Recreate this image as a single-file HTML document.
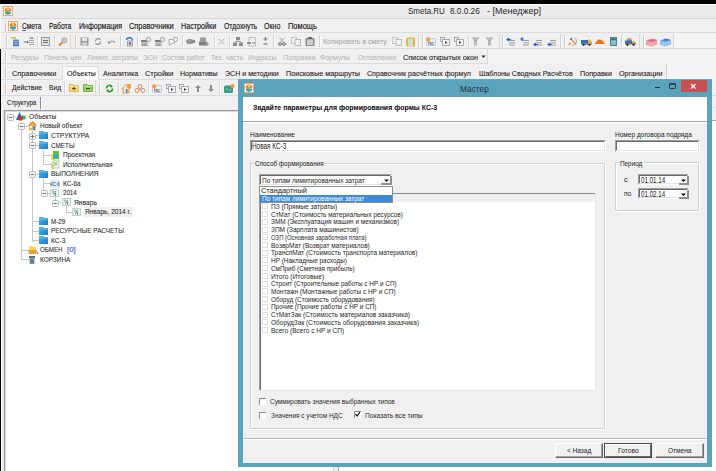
<!DOCTYPE html>
<html><head><meta charset="utf-8">
<style>
*{margin:0;padding:0;box-sizing:border-box}
html,body{width:716px;height:471px;overflow:hidden;background:#fff}
body{position:relative;font-family:"Liberation Sans",sans-serif}
.a{position:absolute}
.t{position:absolute;white-space:pre;line-height:1;transform-origin:0 0}
.s{-webkit-text-stroke:0.25px currentColor}
.s2{-webkit-text-stroke:0.08px currentColor}
.s3{-webkit-text-stroke:0.15px currentColor}
svg{position:absolute;overflow:visible}
</style></head><body>
<div class="a" style="left:0px;top:0px;width:716px;height:4px;background:#000"></div>
<div class="a" style="left:0px;top:4px;width:716px;height:14px;background:#ebebeb"></div>
<div class="a" style="left:0px;top:4px;width:716px;height:1px;background:#fafafa"></div>
<div class="a" style="left:0px;top:4px;width:1px;height:45px;background:#f8f8f8"></div>
<div class="a" style="left:1px;top:18px;width:715px;height:1px;background:#d6d6d6"></div>
<div class="a" style="left:1px;top:19px;width:715px;height:14px;background:#f0f0f0"></div>
<div class="a" style="left:1px;top:32px;width:715px;height:1px;background:#dcdcdc"></div>
<div class="a" style="left:1px;top:33px;width:715px;height:16px;background:#f0f0f0"></div>
<div class="a" style="left:1px;top:48px;width:715px;height:1px;background:#dcdcdc"></div>
<div class="a" style="left:1px;top:49px;width:715px;height:15px;background:#f0f0f0"></div>
<div class="a" style="left:1px;top:63px;width:715px;height:1px;background:#dcdcdc"></div>
<div class="a" style="left:1px;top:64px;width:715px;height:16px;background:#f0f0f0"></div>
<div class="a" style="left:1px;top:79px;width:715px;height:1px;background:#dcdcdc"></div>
<div class="a" style="left:1px;top:80px;width:715px;height:16px;background:#f0f0f0"></div>
<div class="a" style="left:1px;top:95px;width:715px;height:1px;background:#dcdcdc"></div>
<div class="a" style="left:1px;top:96px;width:715px;height:375px;background:#f0f0f0"></div>
<div class="a" style="left:5px;top:21px;width:1px;height:11px;background:#c9c9c9"></div>
<div class="a" style="left:6px;top:21px;width:1px;height:11px;background:#fdfdfd"></div>
<div class="t " style="left:407.8px;top:6.23px;font-size:9.5px;color:#262626;transform:scaleX(0.8421);">Smeta.RU</div>
<div class="t " style="left:449.6px;top:6.23px;font-size:9.5px;color:#262626;transform:scaleX(0.8650);">8.0.0.26</div>
<div class="t " style="left:487.2px;top:6.23px;font-size:9.5px;color:#262626;transform:scaleX(0.9445);">- [Менеджер]</div>
<div class="t s3" style="left:21.9px;top:21.59px;font-size:8.6px;color:#151515;transform:scaleX(0.7684);">Смета</div>
<div class="t s3" style="left:48.6px;top:21.59px;font-size:8.6px;color:#151515;transform:scaleX(0.7893);">Работа</div>
<div class="t s3" style="left:78.7px;top:21.59px;font-size:8.6px;color:#151515;transform:scaleX(0.8185);">Информация</div>
<div class="t s3" style="left:129.2px;top:21.59px;font-size:8.6px;color:#151515;transform:scaleX(0.8580);">Справочники</div>
<div class="t s3" style="left:180.7px;top:21.59px;font-size:8.6px;color:#151515;transform:scaleX(0.8371);">Настройки</div>
<div class="t s3" style="left:223.6px;top:21.59px;font-size:8.6px;color:#151515;transform:scaleX(0.7940);">Отдохнуть</div>
<div class="t s3" style="left:263.6px;top:21.59px;font-size:8.6px;color:#151515;transform:scaleX(0.8206);">Окно</div>
<div class="t s3" style="left:287.7px;top:21.59px;font-size:8.6px;color:#151515;transform:scaleX(0.8701);">Помощь</div>
<div class="a" style="left:22px;top:30px;width:4px;height:1px;background:#666"></div>
<div class="a" style="left:6px;top:35px;width:1px;height:12px;background:#c9c9c9"></div>
<div class="a" style="left:7px;top:35px;width:1px;height:12px;background:#fdfdfd"></div>
<div class="a" style="left:37px;top:35px;width:1px;height:12px;background:#d4d4d4"></div>
<div class="a" style="left:38px;top:35px;width:1px;height:12px;background:#fcfcfc"></div>
<div class="a" style="left:54px;top:35px;width:1px;height:12px;background:#d4d4d4"></div>
<div class="a" style="left:55px;top:35px;width:1px;height:12px;background:#fcfcfc"></div>
<div class="a" style="left:70px;top:34px;width:1px;height:14px;background:#d8d8d8"></div>
<div class="a" style="left:75px;top:35px;width:1px;height:12px;background:#c9c9c9"></div>
<div class="a" style="left:76px;top:35px;width:1px;height:12px;background:#fdfdfd"></div>
<div class="a" style="left:120px;top:35px;width:1px;height:12px;background:#d4d4d4"></div>
<div class="a" style="left:121px;top:35px;width:1px;height:12px;background:#fcfcfc"></div>
<div class="a" style="left:137px;top:35px;width:1px;height:12px;background:#d4d4d4"></div>
<div class="a" style="left:138px;top:35px;width:1px;height:12px;background:#fcfcfc"></div>
<div class="a" style="left:182px;top:35px;width:1px;height:12px;background:#d4d4d4"></div>
<div class="a" style="left:183px;top:35px;width:1px;height:12px;background:#fcfcfc"></div>
<div class="a" style="left:214px;top:35px;width:1px;height:12px;background:#d4d4d4"></div>
<div class="a" style="left:215px;top:35px;width:1px;height:12px;background:#fcfcfc"></div>
<div class="a" style="left:229px;top:35px;width:1px;height:12px;background:#d4d4d4"></div>
<div class="a" style="left:230px;top:35px;width:1px;height:12px;background:#fcfcfc"></div>
<div class="a" style="left:273px;top:35px;width:1px;height:12px;background:#d4d4d4"></div>
<div class="a" style="left:274px;top:35px;width:1px;height:12px;background:#fcfcfc"></div>
<div class="a" style="left:319px;top:35px;width:1px;height:12px;background:#d4d4d4"></div>
<div class="a" style="left:320px;top:35px;width:1px;height:12px;background:#fcfcfc"></div>
<div class="a" style="left:418px;top:34px;width:1px;height:14px;background:#d8d8d8"></div>
<div class="a" style="left:422px;top:35px;width:1px;height:12px;background:#c9c9c9"></div>
<div class="a" style="left:423px;top:35px;width:1px;height:12px;background:#fdfdfd"></div>
<div class="a" style="left:468px;top:35px;width:1px;height:12px;background:#d4d4d4"></div>
<div class="a" style="left:469px;top:35px;width:1px;height:12px;background:#fcfcfc"></div>
<div class="a" style="left:499px;top:34px;width:1px;height:14px;background:#d8d8d8"></div>
<div class="a" style="left:502px;top:35px;width:1px;height:12px;background:#c9c9c9"></div>
<div class="a" style="left:503px;top:35px;width:1px;height:12px;background:#fdfdfd"></div>
<div class="a" style="left:560px;top:34px;width:1px;height:14px;background:#d8d8d8"></div>
<div class="a" style="left:564px;top:35px;width:1px;height:12px;background:#c9c9c9"></div>
<div class="a" style="left:565px;top:35px;width:1px;height:12px;background:#fdfdfd"></div>
<div class="a" style="left:621px;top:35px;width:1px;height:12px;background:#d4d4d4"></div>
<div class="a" style="left:622px;top:35px;width:1px;height:12px;background:#fcfcfc"></div>
<div class="a" style="left:639px;top:34px;width:1px;height:14px;background:#d8d8d8"></div>
<div class="a" style="left:643px;top:35px;width:1px;height:12px;background:#c9c9c9"></div>
<div class="a" style="left:644px;top:35px;width:1px;height:12px;background:#fdfdfd"></div>
<div class="a" style="left:673px;top:34px;width:1px;height:14px;background:#d8d8d8"></div>
<div class="t " style="left:322.7px;top:38.20px;font-size:8px;color:#a0a0a0;transform:scaleX(0.8701);">Копировать в смету</div>
<div class="a" style="left:5px;top:51px;width:1px;height:12px;background:#c9c9c9"></div>
<div class="a" style="left:6px;top:51px;width:1px;height:12px;background:#fdfdfd"></div>
<div class="t " style="left:11.2px;top:53.50px;font-size:8.0px;color:#b0b0b0;transform:scaleX(0.8750);">Ресурсы</div>
<div class="t " style="left:44px;top:53.50px;font-size:8.0px;color:#b0b0b0;transform:scaleX(0.8723);">Панель цен</div>
<div class="t " style="left:86.7px;top:53.50px;font-size:8.0px;color:#b0b0b0;transform:scaleX(0.9002);">Лимит. затраты</div>
<div class="t " style="left:142.7px;top:53.50px;font-size:8.0px;color:#b0b0b0;transform:scaleX(0.8264);">ЭСН</div>
<div class="t " style="left:162px;top:53.50px;font-size:8.0px;color:#b0b0b0;transform:scaleX(0.8576);">Состав работ</div>
<div class="t " style="left:210.7px;top:53.50px;font-size:8.0px;color:#b0b0b0;transform:scaleX(0.8562);">Тех. часть</div>
<div class="t " style="left:248.4px;top:53.50px;font-size:8.0px;color:#b0b0b0;transform:scaleX(0.8705);">Индексы</div>
<div class="t " style="left:282.6px;top:53.50px;font-size:8.0px;color:#b0b0b0;transform:scaleX(0.9145);">Поправки</div>
<div class="t " style="left:320px;top:53.50px;font-size:8.0px;color:#b0b0b0;transform:scaleX(0.8618);">Формулы</div>
<div class="t " style="left:357.6px;top:53.50px;font-size:8.0px;color:#b0b0b0;transform:scaleX(0.8565);">Оглавление</div>
<div class="t s2" style="left:403.3px;top:53.50px;font-size:8.0px;color:#141414;transform:scaleX(0.9022);">Список открытых окон</div>
<svg style="left:481px;top:55px" width="5" height="4"><path d="M0.5 0.5h4l-2 2.5z" fill="#222"/></svg>
<div class="a" style="left:487px;top:49px;width:1px;height:15px;background:#d8d8d8"></div>
<div class="a" style="left:488px;top:49px;width:228px;height:15px;background:#f3f3f3"></div>
<div class="a" style="left:5px;top:66px;width:1px;height:12px;background:#c9c9c9"></div>
<div class="a" style="left:6px;top:66px;width:1px;height:12px;background:#fdfdfd"></div>
<div class="a" style="left:62px;top:66px;width:37px;height:14px;background:#fafafa;border:1px solid #dadada;border-bottom:none"></div>
<div class="t s2" style="left:11.5px;top:69.50px;font-size:8.0px;color:#151515;transform:scaleX(0.9141);">Справочники</div>
<div class="t s2" style="left:67.3px;top:69.50px;font-size:8.0px;color:#151515;transform:scaleX(0.8760);">Объекты</div>
<div class="t s2" style="left:102.5px;top:69.50px;font-size:8.0px;color:#151515;transform:scaleX(0.8889);">Аналитика</div>
<div class="t s2" style="left:144.5px;top:69.50px;font-size:8.0px;color:#151515;transform:scaleX(0.9228);">Стройки</div>
<div class="t s2" style="left:180px;top:69.50px;font-size:8.0px;color:#151515;transform:scaleX(0.8853);">Нормативы</div>
<div class="t s2" style="left:224.8px;top:69.50px;font-size:8.0px;color:#151515;transform:scaleX(0.8824);">ЭСН и методики</div>
<div class="t s2" style="left:285.6px;top:69.50px;font-size:8.0px;color:#151515;transform:scaleX(0.9028);">Поисковые маршруты</div>
<div class="t s2" style="left:367px;top:69.50px;font-size:8.0px;color:#151515;transform:scaleX(0.8869);">Справочник расчётных формул</div>
<div class="t s2" style="left:478.7px;top:69.50px;font-size:8.0px;color:#151515;transform:scaleX(0.8732);">Шаблоны Сводных Расчётов</div>
<div class="t s2" style="left:579.8px;top:69.50px;font-size:8.0px;color:#151515;transform:scaleX(0.8948);">Поправки</div>
<div class="t s2" style="left:618.5px;top:69.50px;font-size:8.0px;color:#151515;transform:scaleX(0.8990);">Организации</div>
<div class="a" style="left:666px;top:64px;width:1px;height:16px;background:#d0d0d0"></div>
<div class="a" style="left:667px;top:64px;width:49px;height:16px;background:#f3f3f3"></div>
<div class="a" style="left:5px;top:82px;width:1px;height:12px;background:#c9c9c9"></div>
<div class="a" style="left:6px;top:82px;width:1px;height:12px;background:#fdfdfd"></div>
<div class="t s2" style="left:11.7px;top:83.70px;font-size:8.0px;color:#151515;transform:scaleX(0.8559);">Действие</div>
<div class="t s2" style="left:48.9px;top:83.70px;font-size:8.0px;color:#151515;transform:scaleX(0.8291);">Вид</div>
<div class="a" style="left:64px;top:82px;width:1px;height:12px;background:#d4d4d4"></div>
<div class="a" style="left:65px;top:82px;width:1px;height:12px;background:#fcfcfc"></div>
<div class="a" style="left:95px;top:81px;width:1px;height:14px;background:#d8d8d8"></div>
<div class="a" style="left:99px;top:82px;width:1px;height:12px;background:#c9c9c9"></div>
<div class="a" style="left:100px;top:82px;width:1px;height:12px;background:#fdfdfd"></div>
<div class="a" style="left:118px;top:82px;width:1px;height:12px;background:#d4d4d4"></div>
<div class="a" style="left:119px;top:82px;width:1px;height:12px;background:#fcfcfc"></div>
<div class="a" style="left:148px;top:82px;width:1px;height:12px;background:#d4d4d4"></div>
<div class="a" style="left:149px;top:82px;width:1px;height:12px;background:#fcfcfc"></div>
<div class="a" style="left:219px;top:82px;width:1px;height:12px;background:#d4d4d4"></div>
<div class="a" style="left:220px;top:82px;width:1px;height:12px;background:#fcfcfc"></div>
<div class="t s2" style="left:6.7px;top:98.84px;font-size:7.6px;color:#151515;transform:scaleX(0.8126);">Структура</div>
<div class="a" style="left:40px;top:97px;width:1px;height:12px;background:#8a8a8a"></div>
<div class="a" style="left:41px;top:97px;width:1px;height:12px;background:#fff"></div>
<div class="a" style="left:0px;top:49px;width:1px;height:422px;background:#000"></div>
<div class="a" style="left:4px;top:110px;width:330px;height:361px;background:#fff;border-left:1px solid #9a9a9a;border-top:1px solid #9a9a9a"></div>
<div class="a" style="left:5px;top:111px;width:329px;height:1px;background:#dadada"></div>
<div class="a" style="left:5px;top:111px;width:1px;height:360px;background:#dadada"></div>
<div class="a" style="left:1px;top:110px;width:1px;height:361px;background:#fff"></div>
<div class="a" style="left:2px;top:110px;width:2px;height:361px;background:#e8e8e8"></div>
<div class="a" style="left:334px;top:110px;width:4px;height:361px;background:#f0f0f0"></div>
<div class="a" style="left:333px;top:110px;width:1px;height:361px;background:#d0d0d0"></div>
<div class="a" style="left:338px;top:120px;width:378px;height:351px;background:#fff;border-top:1px solid #a5a5a5;border-left:1px solid #a5a5a5"></div>
<div class="a" style="left:712px;top:107px;width:4px;height:1px;background:#e4e4e4"></div>
<div class="a" style="left:238px;top:79px;width:474px;height:388px;background:#5aa3bd"></div>
<div class="a" style="left:238px;top:79px;width:474px;height:1px;background:#6aa6ba"></div>
<div class="a" style="left:243px;top:97px;width:464px;height:366px;background:#f0f0f0"></div>
<div class="a" style="left:243px;top:97px;width:464px;height:24px;background:#fff"></div>
<div class="a" style="left:243px;top:121px;width:464px;height:1px;background:#a0a0a0"></div>
<div class="a" style="left:243px;top:122px;width:464px;height:1px;background:#fff"></div>
<svg style="left:244px;top:83px" width="10" height="10"><rect x="0.5" y="0.5" width="9" height="9" fill="#fff" stroke="#f2a870"/><path d="M1.5 5a3.5 3.5 0 0 1 7 0z" fill="#f58a1f"/><circle cx="5" cy="3.2" r="1" fill="#ffd9a0"/><path d="M1.8 5.5h6.4a3.2 3.2 0 0 1-6.4 0z" fill="#3aa0d0"/><path d="M1.8 5.5h3.5l-1 2.8a3.2 3.2 0 0 1-2.5-2.8z" fill="#4cb04a"/></svg>
<svg style="left:3px;top:6px" width="10" height="10"><rect x="0.5" y="0.5" width="9" height="9" fill="#fff" stroke="#f2a870"/><path d="M1.5 5a3.5 3.5 0 0 1 7 0z" fill="#f58a1f"/><circle cx="5" cy="3.2" r="1" fill="#ffd9a0"/><path d="M1.8 5.5h6.4a3.2 3.2 0 0 1-6.4 0z" fill="#3aa0d0"/><path d="M1.8 5.5h3.5l-1 2.8a3.2 3.2 0 0 1-2.5-2.8z" fill="#4cb04a"/></svg>
<svg style="left:8px;top:21px" width="10" height="10"><rect x="0.5" y="0.5" width="9" height="9" fill="#fff" stroke="#f2a870"/><path d="M1.5 5a3.5 3.5 0 0 1 7 0z" fill="#f58a1f"/><circle cx="5" cy="3.2" r="1" fill="#ffd9a0"/><path d="M1.8 5.5h6.4a3.2 3.2 0 0 1-6.4 0z" fill="#3aa0d0"/><path d="M1.8 5.5h3.5l-1 2.8a3.2 3.2 0 0 1-2.5-2.8z" fill="#4cb04a"/></svg>
<div class="t " style="left:459.9px;top:83.54px;font-size:9.6px;color:#263238;transform:scaleX(0.8672);">Мастер</div>
<div class="a" style="left:655px;top:87px;width:5px;height:1px;background:#1e2f36"></div>
<svg style="left:669px;top:83px" width="8" height="6"><rect x="0.5" y="0.5" width="6" height="5" rx="0.8" fill="none" stroke="#2a3b42"/><rect x="0.5" y="0.5" width="6" height="1.3" fill="#2a3b42"/></svg>
<div class="a" style="left:681px;top:80px;width:26px;height:12px;background:#c75050"></div>
<svg style="left:690px;top:83px" width="7" height="7"><path d="M1 1l4.5 4.5M5.5 1l-4.5 4.5" stroke="#fff" stroke-width="1.1"/></svg>
<div class="t " style="left:253.4px;top:103.54px;font-size:7.6px;color:#0a0a0a;font-weight:bold;transform:scaleX(0.9218);">Задайте параметры для формирования формы КС-3</div>
<div class="t " style="left:250.1px;top:131.17px;font-size:7.8px;color:#202020;transform:scaleX(0.8322);">Наименование</div>
<div class="a" style="left:250px;top:140px;width:356px;height:12px;background:#fff;border-top:1px solid #a0a0a0;border-left:1px solid #a0a0a0;border-bottom:1px solid #fff;border-right:1px solid #fff"></div>
<div class="a" style="left:251px;top:141px;width:354px;height:1px;background:#696969"></div>
<div class="a" style="left:251px;top:141px;width:1px;height:10px;background:#696969"></div>
<div class="a" style="left:251px;top:150px;width:354px;height:1px;background:#e3e3e3"></div>
<div class="a" style="left:604px;top:141px;width:1px;height:10px;background:#e3e3e3"></div>
<div class="t " style="left:251.8px;top:143.13px;font-size:8.2px;color:#202020;transform:scaleX(0.7809);">Новая КС-3</div>
<div class="t " style="left:615px;top:131.37px;font-size:7.8px;color:#202020;transform:scaleX(0.8382);">Номер договора подряда</div>
<div class="a" style="left:615px;top:140px;width:85px;height:12px;background:#fff;border-top:1px solid #a0a0a0;border-left:1px solid #a0a0a0;border-bottom:1px solid #fff;border-right:1px solid #fff"></div>
<div class="a" style="left:616px;top:141px;width:83px;height:1px;background:#696969"></div>
<div class="a" style="left:616px;top:141px;width:1px;height:10px;background:#696969"></div>
<div class="a" style="left:616px;top:150px;width:83px;height:1px;background:#e3e3e3"></div>
<div class="a" style="left:698px;top:141px;width:1px;height:10px;background:#e3e3e3"></div>
<div class="a" style="left:250px;top:163px;width:355px;height:266px;border:1px solid #d0d0d0"></div>
<div class="a" style="left:251px;top:164px;width:353px;height:264px;border-left:1px solid #fff;border-top:1px solid #fff"></div>
<div class="a" style="left:250px;top:429px;width:356px;height:1px;background:#fff"></div>
<div class="a" style="left:605px;top:163px;width:1px;height:267px;background:#fff"></div>
<div class="a" style="left:254px;top:160px;width:71px;height:7px;background:#f0f0f0"></div>
<div class="t " style="left:255px;top:160.27px;font-size:7.8px;color:#202020;transform:scaleX(0.8186);">Способ формирования</div>
<div class="a" style="left:615px;top:162px;width:84px;height:49px;border:1px solid #d0d0d0"></div>
<div class="a" style="left:616px;top:163px;width:82px;height:47px;border-left:1px solid #fff;border-top:1px solid #fff"></div>
<div class="a" style="left:615px;top:211px;width:85px;height:1px;background:#fff"></div>
<div class="a" style="left:699px;top:162px;width:1px;height:50px;background:#fff"></div>
<div class="a" style="left:619px;top:159px;width:25px;height:7px;background:#f0f0f0"></div>
<div class="t " style="left:619.9px;top:160.17px;font-size:7.8px;color:#202020;transform:scaleX(0.8151);">Период</div>
<div class="t " style="left:624.2px;top:176.07px;font-size:7.8px;color:#202020;transform:scaleX(0.9744);">с</div>
<div class="t " style="left:624.4px;top:190.17px;font-size:7.8px;color:#202020;transform:scaleX(0.8526);">по</div>
<div class="a" style="left:638px;top:174px;width:51px;height:11px;background:#fff;border-top:1px solid #a0a0a0;border-left:1px solid #a0a0a0;border-bottom:1px solid #fff;border-right:1px solid #fff"></div>
<div class="a" style="left:639px;top:175px;width:49px;height:1px;background:#696969"></div>
<div class="a" style="left:639px;top:175px;width:1px;height:9px;background:#696969"></div>
<div class="a" style="left:639px;top:183px;width:49px;height:1px;background:#e3e3e3"></div>
<div class="a" style="left:687px;top:175px;width:1px;height:9px;background:#e3e3e3"></div>
<div class="a" style="left:679px;top:176px;width:10px;height:9px;background:#fff;border-right:2px solid #8e8e8e;border-bottom:2px solid #8e8e8e"></div>
<svg style="left:681.0px;top:178.5px" width="5" height="4"><path d="M0 0.5h5l-2.5 2.5z" fill="#000"/></svg>
<div class="t " style="left:640.8px;top:177.03px;font-size:8.2px;color:#202020;transform:scaleX(0.7582);">01.01.14</div>
<div class="a" style="left:638px;top:188px;width:51px;height:11px;background:#fff;border-top:1px solid #a0a0a0;border-left:1px solid #a0a0a0;border-bottom:1px solid #fff;border-right:1px solid #fff"></div>
<div class="a" style="left:639px;top:189px;width:49px;height:1px;background:#696969"></div>
<div class="a" style="left:639px;top:189px;width:1px;height:9px;background:#696969"></div>
<div class="a" style="left:639px;top:197px;width:49px;height:1px;background:#e3e3e3"></div>
<div class="a" style="left:687px;top:189px;width:1px;height:9px;background:#e3e3e3"></div>
<div class="a" style="left:679px;top:190px;width:10px;height:9px;background:#fff;border-right:2px solid #8e8e8e;border-bottom:2px solid #8e8e8e"></div>
<svg style="left:681.0px;top:192.5px" width="5" height="4"><path d="M0 0.5h5l-2.5 2.5z" fill="#000"/></svg>
<div class="t " style="left:640.8px;top:191.03px;font-size:8.2px;color:#202020;transform:scaleX(0.7582);">01.02.14</div>
<div class="a" style="left:259px;top:193px;width:337px;height:198px;background:#fff"></div>
<div class="a" style="left:259px;top:193px;width:337px;height:1px;background:#8a8a8a"></div>
<div class="a" style="left:259px;top:194px;width:1px;height:197px;background:#a0a0a0"></div>
<div class="a" style="left:260px;top:194px;width:1px;height:197px;background:#6e6e6e"></div>
<div class="a" style="left:261px;top:194px;width:335px;height:8px;background:#efefef"></div>
<div class="a" style="left:259px;top:390px;width:337px;height:1px;background:#e6e6e6"></div>
<div class="a" style="left:595px;top:193px;width:1px;height:198px;background:#e6e6e6"></div>
<svg style="left:262px;top:203px" width="6" height="6"><rect x="0.5" y="0.5" width="5" height="5" fill="#fff" stroke="#e0e0e0"/></svg>
<div class="t " style="left:270.8px;top:202.85px;font-size:7.0px;color:#1e1e1e;transform:scaleX(0.9429);">ПЗ (Прямые затраты)</div>
<svg style="left:262px;top:211px" width="6" height="6"><rect x="0.5" y="0.5" width="5" height="5" fill="#fff" stroke="#e0e0e0"/></svg>
<div class="t " style="left:270.8px;top:210.59px;font-size:7.0px;color:#1e1e1e;transform:scaleX(0.9170);">СтМат (Стоимость материальных ресурсов)</div>
<svg style="left:262px;top:219px" width="6" height="6"><rect x="0.5" y="0.5" width="5" height="5" fill="#fff" stroke="#e0e0e0"/></svg>
<div class="t " style="left:270.8px;top:218.33px;font-size:7.0px;color:#1e1e1e;transform:scaleX(0.9219);">ЗММ (Эксплуатация машин и механизмов)</div>
<svg style="left:262px;top:227px" width="6" height="6"><rect x="0.5" y="0.5" width="5" height="5" fill="#fff" stroke="#e0e0e0"/></svg>
<div class="t " style="left:270.8px;top:226.07px;font-size:7.0px;color:#1e1e1e;transform:scaleX(0.9277);">ЗПМ (Зарплата машинистов)</div>
<svg style="left:262px;top:234px" width="6" height="6"><rect x="0.5" y="0.5" width="5" height="5" fill="#fff" stroke="#e0e0e0"/></svg>
<div class="t " style="left:270.8px;top:233.81px;font-size:7.0px;color:#1e1e1e;transform:scaleX(0.8428);">ОЗП (Основная заработная плата)</div>
<svg style="left:262px;top:242px" width="6" height="6"><rect x="0.5" y="0.5" width="5" height="5" fill="#fff" stroke="#e0e0e0"/></svg>
<div class="t " style="left:270.8px;top:241.55px;font-size:7.0px;color:#1e1e1e;transform:scaleX(0.9320);">ВозврМат (Возврат материалов)</div>
<svg style="left:262px;top:250px" width="6" height="6"><rect x="0.5" y="0.5" width="5" height="5" fill="#fff" stroke="#e0e0e0"/></svg>
<div class="t " style="left:270.8px;top:249.29px;font-size:7.0px;color:#1e1e1e;transform:scaleX(0.9321);">ТранспМат (Стоимость транспорта материалов)</div>
<svg style="left:262px;top:257px" width="6" height="6"><rect x="0.5" y="0.5" width="5" height="5" fill="#fff" stroke="#e0e0e0"/></svg>
<div class="t " style="left:270.8px;top:257.03px;font-size:7.0px;color:#1e1e1e;transform:scaleX(0.9169);">НР (Накладные расходы)</div>
<svg style="left:262px;top:265px" width="6" height="6"><rect x="0.5" y="0.5" width="5" height="5" fill="#fff" stroke="#e0e0e0"/></svg>
<div class="t " style="left:270.8px;top:264.77px;font-size:7.0px;color:#1e1e1e;transform:scaleX(0.9106);">СмПриб (Сметная прибыль)</div>
<svg style="left:262px;top:273px" width="6" height="6"><rect x="0.5" y="0.5" width="5" height="5" fill="#fff" stroke="#e0e0e0"/></svg>
<div class="t " style="left:270.8px;top:272.51px;font-size:7.0px;color:#1e1e1e;transform:scaleX(0.9493);">Итого (Итоговые)</div>
<svg style="left:262px;top:281px" width="6" height="6"><rect x="0.5" y="0.5" width="5" height="5" fill="#fff" stroke="#e0e0e0"/></svg>
<div class="t " style="left:270.8px;top:280.25px;font-size:7.0px;color:#1e1e1e;transform:scaleX(0.9118);">Строит (Строительные работы с НР и СП)</div>
<svg style="left:262px;top:288px" width="6" height="6"><rect x="0.5" y="0.5" width="5" height="5" fill="#fff" stroke="#e0e0e0"/></svg>
<div class="t " style="left:270.8px;top:287.99px;font-size:7.0px;color:#1e1e1e;transform:scaleX(0.9249);">Монтажн (Монтажные работы с НР и СП)</div>
<svg style="left:262px;top:296px" width="6" height="6"><rect x="0.5" y="0.5" width="5" height="5" fill="#fff" stroke="#e0e0e0"/></svg>
<div class="t " style="left:270.8px;top:295.73px;font-size:7.0px;color:#1e1e1e;transform:scaleX(0.9074);">Оборуд (Стоимость оборудования)</div>
<svg style="left:262px;top:304px" width="6" height="6"><rect x="0.5" y="0.5" width="5" height="5" fill="#fff" stroke="#e0e0e0"/></svg>
<div class="t " style="left:270.8px;top:303.47px;font-size:7.0px;color:#1e1e1e;transform:scaleX(0.9130);">Прочие (Прочие работы с НР и СП)</div>
<svg style="left:262px;top:312px" width="6" height="6"><rect x="0.5" y="0.5" width="5" height="5" fill="#fff" stroke="#e0e0e0"/></svg>
<div class="t " style="left:270.8px;top:311.21px;font-size:7.0px;color:#1e1e1e;transform:scaleX(0.9350);">СтМатЗак (Стоимость материалов заказчика)</div>
<svg style="left:262px;top:319px" width="6" height="6"><rect x="0.5" y="0.5" width="5" height="5" fill="#fff" stroke="#e0e0e0"/></svg>
<div class="t " style="left:270.8px;top:318.95px;font-size:7.0px;color:#1e1e1e;transform:scaleX(0.9316);">ОборудЗак (Стоимость оборудования заказчика)</div>
<svg style="left:262px;top:327px" width="6" height="6"><rect x="0.5" y="0.5" width="5" height="5" fill="#fff" stroke="#e0e0e0"/></svg>
<div class="t " style="left:270.8px;top:326.69px;font-size:7.0px;color:#1e1e1e;transform:scaleX(0.9347);">Всего (Всего с НР и СП)</div>
<div class="a" style="left:259px;top:174px;width:133px;height:12px;background:#fff;border-top:1px solid #a0a0a0;border-left:1px solid #a0a0a0;border-bottom:1px solid #fff;border-right:1px solid #fff"></div>
<div class="a" style="left:260px;top:175px;width:131px;height:1px;background:#696969"></div>
<div class="a" style="left:260px;top:175px;width:1px;height:10px;background:#696969"></div>
<div class="a" style="left:260px;top:184px;width:131px;height:1px;background:#e3e3e3"></div>
<div class="a" style="left:390px;top:175px;width:1px;height:10px;background:#e3e3e3"></div>
<div class="a" style="left:381px;top:176px;width:11px;height:9px;background:#fff;border-right:2px solid #8e8e8e;border-bottom:2px solid #8e8e8e"></div>
<svg style="left:383.5px;top:178.5px" width="5" height="4"><path d="M0 0.5h5l-2.5 2.5z" fill="#000"/></svg>
<div class="t " style="left:261.7px;top:177.07px;font-size:7.8px;color:#202020;transform:scaleX(0.8328);">По типам лимитированных затрат</div>
<div class="a" style="left:259px;top:186px;width:134px;height:17px;background:#fff;border:1px solid #8e8e8e"></div>
<div class="t " style="left:261.2px;top:187.37px;font-size:7.8px;color:#202020;transform:scaleX(0.9412);">Стандартный</div>
<div class="a" style="left:260px;top:195px;width:132px;height:7px;background:#3d8ad6"></div>
<div class="t " style="left:261.7px;top:194.97px;font-size:7.8px;color:#fff;transform:scaleX(0.8287);">По типам лимитированных затрат</div>
<svg style="left:259px;top:398px" width="7" height="7"><rect x="0" y="0" width="7" height="7" fill="#fff"/><path d="M0.5 7V0.5H7" stroke="#8a8a8a" fill="none"/></svg>
<div class="t " style="left:270.2px;top:397.97px;font-size:7.8px;color:#2a2a2a;transform:scaleX(0.8289);">Суммировать значения выбранных типов</div>
<svg style="left:259px;top:412px" width="7" height="7"><rect x="0" y="0" width="7" height="7" fill="#fff"/><path d="M0.5 7V0.5H7" stroke="#8a8a8a" fill="none"/></svg>
<div class="t " style="left:270.7px;top:411.87px;font-size:7.8px;color:#2a2a2a;transform:scaleX(0.8263);">Значения с учетом НДС</div>
<svg style="left:354px;top:411px" width="7" height="7"><rect x="0" y="0" width="7" height="7" fill="#fff"/><path d="M0.5 7V0.5H7" stroke="#8a8a8a" fill="none"/><path d="M1.5 3.2l1.6 1.8 2.8-3.8" stroke="#111" stroke-width="1.2" fill="none"/></svg>
<div class="t " style="left:364.9px;top:411.87px;font-size:7.8px;color:#2a2a2a;transform:scaleX(0.8528);">Показать все типы</div>
<div class="a" style="left:243px;top:438px;width:464px;height:1px;background:#b9b9b9"></div>
<div class="a" style="left:243px;top:439px;width:464px;height:1px;background:#fff"></div>
<div class="a" style="left:555px;top:443px;width:48px;height:15px;background:#f0f0f0;border-top:1px solid #fff;border-left:1px solid #fff;border-right:1px solid #696969;border-bottom:1px solid #696969"></div>
<div class="a" style="left:601px;top:444px;width:1px;height:13px;background:#a0a0a0"></div>
<div class="a" style="left:556px;top:456px;width:46px;height:1px;background:#a0a0a0"></div>
<div class="t " style="left:567.1px;top:447.37px;font-size:7.8px;color:#222;transform:scaleX(0.8359);">< Назад</div>
<div class="a" style="left:604px;top:443px;width:48px;height:15px;background:#f0f0f0;border:1px solid #4a4a4a"></div>
<div class="a" style="left:605px;top:444px;width:46px;height:13px;border-top:1px solid #fff;border-left:1px solid #fff;border-right:1px solid #696969;border-bottom:1px solid #696969"></div>
<div class="t " style="left:618.2px;top:447.37px;font-size:7.8px;color:#222;transform:scaleX(0.8553);">Готово</div>
<div class="a" style="left:655px;top:443px;width:49px;height:15px;background:#f0f0f0;border-top:1px solid #fff;border-left:1px solid #fff;border-right:1px solid #696969;border-bottom:1px solid #696969"></div>
<div class="a" style="left:702px;top:444px;width:1px;height:13px;background:#a0a0a0"></div>
<div class="a" style="left:656px;top:456px;width:47px;height:1px;background:#a0a0a0"></div>
<div class="t " style="left:667.8px;top:447.37px;font-size:7.8px;color:#222;transform:scaleX(0.8397);">Отмена</div>
<div class="a" style="left:21px;top:122px;width:1px;height:138px;background:#c6c6c6"></div>
<div class="a" style="left:32px;top:131px;width:1px;height:111px;background:#c6c6c6"></div>
<div class="a" style="left:43px;top:150px;width:1px;height:15px;background:#c6c6c6"></div>
<div class="a" style="left:43px;top:179px;width:1px;height:14px;background:#c6c6c6"></div>
<div class="a" style="left:55px;top:197px;width:1px;height:6px;background:#c6c6c6"></div>
<div class="a" style="left:66px;top:206px;width:1px;height:6px;background:#c6c6c6"></div>
<div class="a" style="left:13px;top:116px;width:3px;height:1px;background:#c6c6c6"></div>
<div class="a" style="left:24px;top:126px;width:4px;height:1px;background:#c6c6c6"></div>
<div class="a" style="left:35px;top:135px;width:4px;height:1px;background:#c6c6c6"></div>
<div class="a" style="left:35px;top:145px;width:4px;height:1px;background:#c6c6c6"></div>
<div class="a" style="left:35px;top:174px;width:4px;height:1px;background:#c6c6c6"></div>
<div class="a" style="left:32px;top:221px;width:7px;height:1px;background:#c6c6c6"></div>
<div class="a" style="left:32px;top:231px;width:7px;height:1px;background:#c6c6c6"></div>
<div class="a" style="left:32px;top:240px;width:7px;height:1px;background:#c6c6c6"></div>
<div class="a" style="left:21px;top:250px;width:7px;height:1px;background:#c6c6c6"></div>
<div class="a" style="left:21px;top:259px;width:8px;height:1px;background:#c6c6c6"></div>
<div class="a" style="left:43px;top:155px;width:8px;height:1px;background:#c6c6c6"></div>
<div class="a" style="left:43px;top:164px;width:8px;height:1px;background:#c6c6c6"></div>
<div class="a" style="left:43px;top:183px;width:7px;height:1px;background:#c6c6c6"></div>
<div class="a" style="left:47px;top:193px;width:3px;height:1px;background:#c6c6c6"></div>
<div class="a" style="left:58px;top:202px;width:3px;height:1px;background:#c6c6c6"></div>
<div class="a" style="left:66px;top:212px;width:6px;height:1px;background:#c6c6c6"></div>
<svg style="left:7px;top:114px" width="7" height="7"><rect x="0.5" y="0.5" width="6" height="6" rx="1" fill="#f4f4f4" stroke="#b8b8b8"/><path d="M1.8 3.5h3.4" stroke="#666" stroke-width="0.9"/></svg>
<svg style="left:18px;top:123px" width="7" height="7"><rect x="0.5" y="0.5" width="6" height="6" rx="1" fill="#f4f4f4" stroke="#b8b8b8"/><path d="M1.8 3.5h3.4" stroke="#666" stroke-width="0.9"/></svg>
<svg style="left:29px;top:133px" width="7" height="7"><rect x="0.5" y="0.5" width="6" height="6" rx="1" fill="#f4f4f4" stroke="#b8b8b8"/><path d="M1.8 3.5h3.4" stroke="#666" stroke-width="0.9"/><path d="M3.5 1.8v3.4" stroke="#666" stroke-width="0.9"/></svg>
<svg style="left:29px;top:142px" width="7" height="7"><rect x="0.5" y="0.5" width="6" height="6" rx="1" fill="#f4f4f4" stroke="#b8b8b8"/><path d="M1.8 3.5h3.4" stroke="#666" stroke-width="0.9"/></svg>
<svg style="left:29px;top:171px" width="7" height="7"><rect x="0.5" y="0.5" width="6" height="6" rx="1" fill="#f4f4f4" stroke="#b8b8b8"/><path d="M1.8 3.5h3.4" stroke="#666" stroke-width="0.9"/></svg>
<svg style="left:41px;top:190px" width="7" height="7"><rect x="0.5" y="0.5" width="6" height="6" rx="1" fill="#f4f4f4" stroke="#b8b8b8"/><path d="M1.8 3.5h3.4" stroke="#666" stroke-width="0.9"/></svg>
<svg style="left:52px;top:200px" width="7" height="7"><rect x="0.5" y="0.5" width="6" height="6" rx="1" fill="#f4f4f4" stroke="#b8b8b8"/><path d="M1.8 3.5h3.4" stroke="#666" stroke-width="0.9"/></svg>
<svg style="left:16px;top:112px" width="10" height="9"><path d="M3.5 0L0 8h7z" fill="#1f5fd0"/><rect x="5.5" y="3.5" width="4" height="4" fill="#3cb043"/><circle cx="4.5" cy="6.5" r="2.2" fill="#e02a20"/></svg>
<svg style="left:28px;top:121px" width="9" height="10"><path d="M4.5 0L0 4.5h1v5h7v-5h1z" fill="#f2b35a"/><path d="M4.5 0.8L1 4.5" stroke="#c86a1e" stroke-width="1"/><path d="M4.5 0.8L8 4.5" stroke="#c86a1e"/><rect x="5" y="5" width="2" height="4" fill="#3a8fe0"/><rect x="2" y="5" width="2" height="2" fill="#fff6d8"/></svg>
<svg style="left:39px;top:131px" width="10" height="8"><defs><linearGradient id="fg" x1="0" y1="0" x2="1" y2="1"><stop offset="0" stop-color="#49b7ec"/><stop offset="1" stop-color="#1e78c8"/></linearGradient></defs><path d="M0 0h4l1 1h4v7h-9z" fill="url(#fg)"/><path d="M0 2h9" stroke="#8fd3f7" stroke-width="0.6"/></svg>
<svg style="left:39px;top:141px" width="10" height="8"><defs><linearGradient id="fg" x1="0" y1="0" x2="1" y2="1"><stop offset="0" stop-color="#49b7ec"/><stop offset="1" stop-color="#1e78c8"/></linearGradient></defs><path d="M0 0h4l1 1h4v7h-9z" fill="url(#fg)"/><path d="M0 2h9" stroke="#8fd3f7" stroke-width="0.6"/></svg>
<svg style="left:39px;top:170px" width="10" height="8"><defs><linearGradient id="fg" x1="0" y1="0" x2="1" y2="1"><stop offset="0" stop-color="#49b7ec"/><stop offset="1" stop-color="#1e78c8"/></linearGradient></defs><path d="M0 0h4l1 1h4v7h-9z" fill="url(#fg)"/><path d="M0 2h9" stroke="#8fd3f7" stroke-width="0.6"/></svg>
<svg style="left:39px;top:217px" width="10" height="8"><defs><linearGradient id="fg" x1="0" y1="0" x2="1" y2="1"><stop offset="0" stop-color="#49b7ec"/><stop offset="1" stop-color="#1e78c8"/></linearGradient></defs><path d="M0 0h4l1 1h4v7h-9z" fill="url(#fg)"/><path d="M0 2h9" stroke="#8fd3f7" stroke-width="0.6"/></svg>
<svg style="left:39px;top:227px" width="10" height="8"><defs><linearGradient id="fg" x1="0" y1="0" x2="1" y2="1"><stop offset="0" stop-color="#49b7ec"/><stop offset="1" stop-color="#1e78c8"/></linearGradient></defs><path d="M0 0h4l1 1h4v7h-9z" fill="url(#fg)"/><path d="M0 2h9" stroke="#8fd3f7" stroke-width="0.6"/></svg>
<svg style="left:39px;top:236px" width="10" height="8"><defs><linearGradient id="fg" x1="0" y1="0" x2="1" y2="1"><stop offset="0" stop-color="#49b7ec"/><stop offset="1" stop-color="#1e78c8"/></linearGradient></defs><path d="M0 0h4l1 1h4v7h-9z" fill="url(#fg)"/><path d="M0 2h9" stroke="#8fd3f7" stroke-width="0.6"/></svg>
<svg style="left:51px;top:151px" width="8" height="9"><rect x="0" y="3" width="3" height="6" fill="#e7df6a"/><rect x="2" y="0" width="6" height="8" fill="#5fbf4a"/><rect x="3" y="4" width="4" height="3" fill="#3aa0d8"/></svg>
<svg style="left:51px;top:160px" width="8" height="9"><rect x="0" y="3" width="3" height="6" fill="#e7df6a"/><rect x="2" y="0" width="6" height="8" fill="#e9f3e2" stroke="#8cbf7a" stroke-width="0.6"/><path d="M3 6l3-4M3 2l3 3" stroke="#6a8f5a" stroke-width="0.7"/></svg>
<svg style="left:50px;top:180px" width="10" height="8"><rect x="0" y="0" width="10" height="8" fill="#dcf0f4"/><text x="0.3" y="6.3" font-size="5.6" textLength="9.4" lengthAdjust="spacingAndGlyphs" fill="#1c2a33" font-family="Liberation Sans">КС·6</text></svg>
<svg style="left:50px;top:189px" width="9" height="8"><rect x="0.5" y="0.5" width="8" height="7" fill="#e3f3ea" stroke="#b9d9c6"/><path d="M3 1.5v2.5M5.5 4v3M3.5 6l2-4" stroke="#556" stroke-width="0.7"/></svg>
<svg style="left:62px;top:198px" width="9" height="8"><rect x="0.5" y="0.5" width="8" height="7" fill="#e3f3ea" stroke="#b9d9c6"/><path d="M3 1.5v2.5M5.5 4v3M3.5 6l2-4" stroke="#556" stroke-width="0.7"/></svg>
<svg style="left:72px;top:208px" width="9" height="8"><rect x="0.5" y="0.5" width="8" height="7" fill="#e3f3ea" stroke="#b9d9c6"/><path d="M3 1.5v2.5M5.5 4v3M3.5 6l2-4" stroke="#556" stroke-width="0.7"/></svg>
<svg style="left:28px;top:246px" width="10" height="8"><path d="M1 0h3l1 1h3v4h-7z" fill="#f7d84a"/><path d="M0 4h9l-1 4h-7z" fill="#e99a3b"/><path d="M9 6l1 2" stroke="#345" stroke-width="0.8"/></svg>
<svg style="left:29px;top:256px" width="6" height="8"><rect x="0" y="0" width="6" height="2" fill="#5a7184"/><rect x="0.5" y="2" width="5" height="6" fill="#7f98ac"/><path d="M1 4h4M1 6h4" stroke="#3c5266" stroke-width="0.7"/></svg>
<div class="a" style="left:84px;top:207px;width:49px;height:10px;background:#efefef"></div>
<div class="t s2" style="left:85px;top:208.24px;font-size:7.6px;color:#2a2a2a;transform:scaleX(0.8639);">Январь, 2014 г.</div>
<div class="t s2" style="left:28.6px;top:112.94px;font-size:7.6px;color:#2a2a2a;transform:scaleX(0.8742);">Объекты</div>
<div class="t s2" style="left:39.8px;top:122.47px;font-size:7.6px;color:#2a2a2a;transform:scaleX(0.8560);">Новый объект</div>
<div class="t s2" style="left:51px;top:132.00px;font-size:7.6px;color:#2a2a2a;transform:scaleX(0.8902);">СТРУКТУРА</div>
<div class="t s2" style="left:51px;top:141.53px;font-size:7.6px;color:#2a2a2a;transform:scaleX(0.8412);">СМЕТЫ</div>
<div class="t s2" style="left:62.8px;top:151.06px;font-size:7.6px;color:#2a2a2a;transform:scaleX(0.8623);">Проектная</div>
<div class="t s2" style="left:62.8px;top:160.59px;font-size:7.6px;color:#2a2a2a;transform:scaleX(0.8461);">Исполнительная</div>
<div class="t s2" style="left:51.3px;top:170.12px;font-size:7.6px;color:#2a2a2a;transform:scaleX(0.8607);">ВЫПОЛНЕНИЯ</div>
<div class="t s2" style="left:62.6px;top:179.65px;font-size:7.6px;color:#2a2a2a;transform:scaleX(0.8455);">КС-6а</div>
<div class="t s2" style="left:62.6px;top:189.18px;font-size:7.6px;color:#2a2a2a;transform:scaleX(0.8103);">2014</div>
<div class="t s2" style="left:74px;top:198.71px;font-size:7.6px;color:#2a2a2a;transform:scaleX(0.8790);">Январь</div>
<div class="t s2" style="left:51.3px;top:217.77px;font-size:7.6px;color:#2a2a2a;transform:scaleX(0.8258);">М-29</div>
<div class="t s2" style="left:51.3px;top:227.30px;font-size:7.6px;color:#2a2a2a;transform:scaleX(0.8461);">РЕСУРСНЫЕ РАСЧЕТЫ</div>
<div class="t s2" style="left:51.3px;top:236.83px;font-size:7.6px;color:#2a2a2a;transform:scaleX(0.8621);">КС-3</div>
<div class="t s2" style="left:40.1px;top:246.36px;font-size:7.6px;color:#2a2a2a;transform:scaleX(0.8097);">ОБМЕН</div>
<div class="t s2" style="left:40.1px;top:255.89px;font-size:7.6px;color:#2a2a2a;transform:scaleX(0.8500);">КОРЗИНА</div>
<div class="t s2" style="left:66.5px;top:246.36px;font-size:7.6px;color:#4646c8;transform:scaleX(1.0414);">[0]</div>
<svg style="left:11px;top:37px" width="8" height="10"><rect x="0" y="0" width="5" height="1.6" fill="#c8c628"/><rect x="2" y="2.5" width="6" height="7" rx="1" fill="#5b86c0"/><path d="M2.5 4.5h5M2.5 6.8h5" stroke="#a9c4e8" stroke-width="0.7"/></svg>
<svg style="left:24px;top:37px" width="10" height="9"><path d="M0 5h3.5" stroke="#777" stroke-width="1"/><path d="M3 3.5l2 1.5-2 1.5z" fill="#666"/><path d="M5 1.5h5M5 3.5h5M5 5.5h5M5 7.5h5" stroke="#a5a5a5" stroke-width="1"/><path d="M6 0.5h3" stroke="#999" stroke-width="0.8"/></svg>
<svg style="left:41px;top:37px" width="9" height="9"><rect x="0.5" y="0.5" width="8" height="8" fill="#e2e2e2" stroke="#9a9a9a"/><path d="M2 3.5h5M2 5.5h5" stroke="#6e6e6e" stroke-width="1"/></svg>
<svg style="left:58px;top:37px" width="10" height="9"><circle cx="6.3" cy="3.3" r="2.7" fill="#a9cdf0" stroke="#f2a36a" stroke-width="1"/><path d="M4.3 5.3L1 8.5" stroke="#e2762a" stroke-width="1.8"/></svg>
<svg style="left:80px;top:37px" width="9" height="9"><rect x="0.5" y="0.5" width="8" height="8" fill="#9a9a9a"/><rect x="2" y="1" width="5" height="3" fill="#e8e8e8"/><rect x="2" y="5.5" width="5" height="3" fill="#cfcfcf"/></svg>
<svg style="left:94px;top:37px" width="8" height="9"><path d="M1.5 4.5a2.8 2.8 0 0 1 5-1.8M6.5 4.5a2.8 2.8 0 0 1-5 1.8" stroke="#8a8a8a" stroke-width="1.2" fill="none"/></svg>
<svg style="left:108px;top:39px" width="8" height="5"><path d="M1.5 3.5q2-3 5.5 0" stroke="#8a8a8a" stroke-width="1.1" fill="none"/><path d="M0 2l2.5 2.5h-2.5z" fill="#777"/></svg>
<svg style="left:125px;top:37px" width="9" height="9"><path d="M1.5 3a3 2.5 0 0 1 6 0.5" stroke="#2f6fd8" stroke-width="1.3" fill="none"/><rect x="2.5" y="4" width="5" height="5" fill="#d8d8d8" stroke="#8a8a8a" stroke-width="0.7"/><rect x="4" y="5.5" width="2" height="2" fill="#555"/></svg>
<svg style="left:141px;top:37px" width="10" height="9"><rect x="0" y="3" width="7" height="2" fill="#7c7c7c"/><rect x="0.5" y="5.5" width="6" height="3.5" fill="#9c9c9c"/><path d="M1 7h5" stroke="#ddd" stroke-width="0.6"/><circle cx="7.5" cy="2.5" r="2.2" fill="#e8e8e8" stroke="#8a8a8a" stroke-width="0.7"/></svg>
<svg style="left:155px;top:37px" width="10" height="9"><rect x="0" y="3" width="7" height="2" fill="#7c7c7c"/><rect x="0.5" y="5.5" width="6" height="3.5" fill="#9c9c9c"/><path d="M1 7h5" stroke="#ddd" stroke-width="0.6"/><circle cx="7.5" cy="2.5" r="2.2" fill="#e8e8e8" stroke="#8a8a8a" stroke-width="0.7"/></svg>
<svg style="left:168px;top:37px" width="10" height="9"><path d="M1 2.5h5.5v4h-3l-2 2v-2h-0.5z" fill="#f4f4f4" stroke="#9a9a9a" stroke-width="0.8"/><circle cx="7.5" cy="2.5" r="2.2" fill="#eee" stroke="#8a8a8a" stroke-width="0.7"/></svg>
<svg style="left:186px;top:38px" width="9" height="7"><ellipse cx="4" cy="3.5" rx="4" ry="2.5" fill="#8f8f8f"/><path d="M6 3.5l3-1.5v3z" fill="#7a7a7a"/><path d="M2 3h3" stroke="#ccc" stroke-width="0.6"/></svg>
<svg style="left:199px;top:37px" width="10" height="9"><rect x="1" y="0.5" width="6" height="4" fill="#9c9c9c"/><rect x="0" y="4.5" width="8" height="4" fill="#7f7f7f"/><circle cx="8" cy="7" r="1.8" fill="#9a9a9a"/></svg>
<svg style="left:218px;top:38px" width="7" height="7"><path d="M0.5 0.5l6 6M6.5 0.5l-6 6" stroke="#b5b5b5" stroke-width="1"/></svg>
<svg style="left:233px;top:37px" width="10" height="9"><rect x="3" y="0" width="4" height="3" fill="#8c8c8c"/><path d="M5 3v1.5M2 4.5h6v1" stroke="#8c8c8c" stroke-width="0.8" fill="none"/><rect x="0" y="5.5" width="4" height="3.5" fill="#8c8c8c"/><rect x="6" y="5.5" width="4" height="3.5" fill="#8c8c8c"/></svg>
<svg style="left:247px;top:37px" width="9" height="9"><path d="M2 0.5h6.5v8.5h-6.5z" fill="#f0f0f0" stroke="#b0b0b0" stroke-width="0.8"/><path d="M0 6h4" stroke="#555" stroke-width="1.2"/><path d="M5 6h3" stroke="#777"/></svg>
<svg style="left:263px;top:37px" width="5" height="9"><path d="M2.5 0v4M0.5 2h4" stroke="#7a7a7a" stroke-width="1.2"/><path d="M0.5 7h4" stroke="#7a7a7a" stroke-width="1.2"/></svg>
<svg style="left:278px;top:37px" width="8" height="9"><path d="M1.5 0.5l4.5 5M6.5 0.5l-4.5 5" stroke="#a8a8a8" stroke-width="1"/><circle cx="2" cy="7" r="1.4" fill="none" stroke="#6a6a6a" stroke-width="1"/><circle cx="6" cy="7" r="1.4" fill="none" stroke="#6a6a6a" stroke-width="1"/></svg>
<svg style="left:291px;top:37px" width="10" height="9"><rect x="0.5" y="0.5" width="5" height="6" fill="#f2f2f2" stroke="#b8b8b8" stroke-width="0.8"/><rect x="4" y="2.5" width="5.5" height="6" fill="#f2f2f2" stroke="#a8a8a8" stroke-width="0.8"/></svg>
<svg style="left:305px;top:37px" width="10" height="9"><rect x="0.5" y="1" width="9" height="8" rx="1" fill="#8a8a8a"/><rect x="2" y="2.5" width="6" height="5.5" fill="#cfcfcf"/><rect x="3" y="0" width="4" height="1.8" fill="#6a6a6a"/></svg>
<svg style="left:392px;top:37px" width="10" height="9"><rect x="0.5" y="0.5" width="5" height="6" fill="#f2f2f2" stroke="#bcbcbc" stroke-width="0.8"/><rect x="4" y="2.5" width="5.5" height="6" fill="#f2f2f2" stroke="#b0b0b0" stroke-width="0.8"/></svg>
<svg style="left:406px;top:37px" width="9" height="10"><rect x="0" y="0.5" width="9" height="9" rx="1.5" fill="#f3b324"/><rect x="2" y="2" width="5" height="7" fill="#bfe3ee"/></svg>
<svg style="left:426px;top:37px" width="10" height="9"><rect x="0.5" y="1.5" width="9" height="7" rx="1" fill="#e7edf3" stroke="#b3c3d3" stroke-width="0.8"/><text x="2" y="8" font-size="5.5" font-family="Liberation Sans" fill="#333">hc</text><circle cx="2.2" cy="2.2" r="2" fill="#f29a38"/></svg>
<svg style="left:440px;top:37px" width="10" height="9"><rect x="0.5" y="0.5" width="4" height="4" fill="#f4f4f4" stroke="#8a8a8a" stroke-width="0.7"/><rect x="2.5" y="2.5" width="7" height="6" fill="#f4f4f4" stroke="#9a9a9a" stroke-width="0.8"/><path d="M5 4l2.5 1.5-2.5 1.5z" fill="#444"/></svg>
<svg style="left:454px;top:37px" width="10" height="9"><rect x="0.5" y="0.5" width="4" height="4" fill="#f4f4f4" stroke="#8a8a8a" stroke-width="0.7"/><rect x="2.5" y="2.5" width="7" height="6" fill="#f4f4f4" stroke="#9a9a9a" stroke-width="0.8"/><path d="M5 4l2.5 1.5-2.5 1.5z" fill="#444"/></svg>
<svg style="left:471px;top:37px" width="9" height="9"><path d="M0.5 0.5h8l-2.5 3v5h-3v-5z" fill="#a5a5a5"/><path d="M2 2h5M3 5h3M3 7h3" stroke="#e9e9e9" stroke-width="0.6"/></svg>
<svg style="left:485px;top:37px" width="9" height="9"><path d="M0.5 0.5h8l-2.5 3v5h-3v-5z" fill="#a5a5a5"/><path d="M2 2h5M3 5h3M3 7h3" stroke="#e9e9e9" stroke-width="0.6"/></svg>
<svg style="left:506px;top:37px" width="10" height="9"><path d="M3 3.5h6M3 5.8h6M3 8h6" stroke="#9a9a9a" stroke-width="1"/><path d="M0 2.5l3-2v4z" fill="#2a5fd0"/><path d="M2 2.5h3" stroke="#2a5fd0" stroke-width="1.2"/></svg>
<svg style="left:520px;top:37px" width="10" height="9"><path d="M3 3.5h6M3 5.8h6M3 8h6" stroke="#9a9a9a" stroke-width="1"/><path d="M2 0l2 2.5h-4z" fill="#2a5fd0"/><path d="M2 2v2" stroke="#2a5fd0" stroke-width="1.2"/></svg>
<svg style="left:533px;top:37px" width="10" height="9"><path d="M3 3.5h6M3 5.8h6M3 8h6" stroke="#9a9a9a" stroke-width="1"/><path d="M0 7.5l3-2v4z" fill="#2a5fd0"/><path d="M2 7.5h3" stroke="#2a5fd0" stroke-width="1.2"/></svg>
<svg style="left:547px;top:37px" width="10" height="9"><path d="M3 3.5h6M3 5.8h6M3 8h6" stroke="#9a9a9a" stroke-width="1"/><path d="M0 7.5l3-2v4z" fill="#2a5fd0"/><path d="M2 7.5h3" stroke="#2a5fd0" stroke-width="1.2"/></svg>
<svg style="left:568px;top:37px" width="10" height="9"><path d="M6.5 0.8a3.8 3.8 0 0 1 0.5 6.5q-1.5 1-3.5 0.7" stroke="#9fb6bd" stroke-width="1" fill="none"/><path d="M3 1.8l5 5.5" stroke="#d98a2a" stroke-width="1.2"/><path d="M1.5 2.2l2-1.8 1 1.2-2 1.6z" fill="#6a7378"/><path d="M0.8 7.8l2-2" stroke="#d98a2a" stroke-width="1.3"/></svg>
<svg style="left:581px;top:39px" width="11" height="7"><rect x="0" y="1" width="7" height="3.8" fill="#2d72c8"/><path d="M7 0.5h2l2 2.5v2h-4z" fill="#eab13a"/><rect x="0.5" y="4.8" width="10" height="0.8" fill="#4a4a3a"/><circle cx="2.5" cy="5.8" r="1.1" fill="#333"/><circle cx="8.5" cy="5.8" r="1.1" fill="#333"/></svg>
<svg style="left:595px;top:39px" width="10" height="5"><path d="M0 5q2-5 5-4.5t5 4.5z" fill="#e8731c"/></svg>
<svg style="left:610px;top:37px" width="7" height="9"><rect x="0.5" y="0.5" width="6" height="8" fill="#7fb2c9" stroke="#3f8a96"/><rect x="1.3" y="1.5" width="4.4" height="1.6" fill="#4a5a60"/><path d="M1.5 4.5h4M1.5 6.3h4" stroke="#a9d3e3" stroke-width="0.6"/></svg>
<svg style="left:625px;top:38px" width="11" height="8"><path d="M2 0.5l4-0.5 1 3h-5z" fill="#e58a3a"/><rect x="0" y="2.5" width="7" height="3" fill="#2f6fc2"/><path d="M7 3h2.5l1 1.5v1h-3.5z" fill="#f0b040"/><rect x="0" y="5.5" width="11" height="0.8" fill="#333"/><circle cx="2.5" cy="6.8" r="1.1" fill="#222"/><circle cx="8.5" cy="6.8" r="1.1" fill="#222"/></svg>
<svg style="left:646px;top:38px" width="11" height="8"><path d="M1 2.2L6 0.5l4.5 1.2-5 1.8z" fill="#ec78b8"/><path d="M0.5 3L5.5 4.5l5-1.8v1.3l-5 1.8-5-1.5z" fill="#fff" stroke="#e8607a" stroke-width="0.6"/><path d="M0.5 5.2l5 1.5 5-1.8v1.2l-5 1.9-5-1.5z" fill="#fff" stroke="#e04a5a" stroke-width="0.6"/><path d="M0.8 2.2v0.8l4.7 1.4 5-1.7v-1" fill="#e8607a" opacity="0.8"/></svg>
<svg style="left:660px;top:38px" width="11" height="8"><path d="M1 2.2L6 0.5l4.5 1.2-5 1.8z" fill="#4a6ad0"/><path d="M0.5 3L5.5 4.5l5-1.8v1.3l-5 1.8-5-1.5z" fill="#fff" stroke="#4a9ae0" stroke-width="0.6"/><path d="M0.5 5.2l5 1.5 5-1.8v1.2l-5 1.9-5-1.5z" fill="#fff" stroke="#3a8ad8" stroke-width="0.6"/><path d="M0.8 2.2v0.8l4.7 1.4 5-1.7v-1" fill="#4a9ae0" opacity="0.8"/></svg>
<div class="a" style="left:674px;top:33px;width:42px;height:15px;background:#f4f4f4"></div>
<div class="a" style="left:673px;top:34px;width:1px;height:14px;background:#d8d8d8"></div>
<svg style="left:69px;top:84px" width="10" height="8"><path d="M0.5 1.5V0.5h3.5l1 1h4.5v6h-9z" fill="#f6dc6a" stroke="#d8b232" stroke-width="0.8"/><path d="M1 2.5h8" stroke="#fff3b8" stroke-width="0.8"/><path d="M3 4.5h4M5 2.5v4" stroke="#5a4a20" stroke-width="1"/></svg>
<svg style="left:83px;top:84px" width="10" height="8"><path d="M0.5 1.5V0.5h3.5l1 1h4.5v6h-9z" fill="#96cc5e" stroke="#6aa33a" stroke-width="0.8"/><path d="M1 2.5h8" stroke="#cdeaa8" stroke-width="0.8"/><path d="M3 4.5h4" stroke="#2e4a1a" stroke-width="1"/></svg>
<svg style="left:105px;top:84px" width="9" height="9"><path d="M1.5 4.5a3 3 0 0 1 5.5-1.8M7.5 4.5a3 3 0 0 1-5.5 1.8" stroke="#2f9e3a" stroke-width="1.6" fill="none"/><path d="M5.5 0.5l2.5 2.5-3 0.5z" fill="#2f9e3a"/><path d="M3.5 8.5l-2.5-2.5 3-0.5z" fill="#2f9e3a"/></svg>
<svg style="left:122px;top:84px" width="9" height="9"><path d="M4 0.5L0 4.5h1v4.5h6v-4.5h1z" fill="#f6e6c8" stroke="#c58a3a" stroke-width="0.8"/><rect x="5" y="0" width="4" height="4" fill="#f2a03c"/><rect x="4" y="5" width="1.5" height="3.5" fill="#3a80d8"/></svg>
<svg style="left:135px;top:84px" width="10" height="9"><circle cx="5" cy="2.5" r="2" fill="#f6f0e8" stroke="#c0763a" stroke-width="0.8"/><circle cx="2" cy="6.5" r="2" fill="#f6f0e8" stroke="#c0763a" stroke-width="0.8"/><circle cx="8" cy="6.5" r="2" fill="#f6f0e8" stroke="#c0763a" stroke-width="0.8"/><circle cx="5" cy="4.8" r="1" fill="#7ab0e0"/></svg>
<svg style="left:152px;top:84px" width="10" height="9"><rect x="0.5" y="1.5" width="9" height="7" rx="1" fill="#e7edf3" stroke="#b3c3d3" stroke-width="0.8"/><text x="2" y="8" font-size="5.5" font-family="Liberation Sans" fill="#333">hc</text><circle cx="2.2" cy="2.2" r="2" fill="#f29a38"/></svg>
<svg style="left:166px;top:84px" width="10" height="9"><rect x="0.5" y="0.5" width="4" height="4" fill="#f4f4f4" stroke="#8a8a8a" stroke-width="0.7"/><rect x="2.5" y="2.5" width="7" height="6" fill="#f4f4f4" stroke="#9a9a9a" stroke-width="0.8"/><path d="M5 4l2.5 1.5-2.5 1.5z" fill="#444"/></svg>
<svg style="left:179px;top:84px" width="10" height="9"><rect x="0.5" y="0.5" width="4" height="4" fill="#f4f4f4" stroke="#8a8a8a" stroke-width="0.7"/><rect x="2.5" y="2.5" width="7" height="6" fill="#f4f4f4" stroke="#9a9a9a" stroke-width="0.8"/><path d="M5 4l2.5 1.5-2.5 1.5z" fill="#444"/></svg>
<svg style="left:195px;top:85px" width="6" height="7"><path d="M3 0l3 3h-2v4h-2v-4h-2z" fill="#8f8f8f"/></svg>
<svg style="left:208px;top:85px" width="6" height="7"><path d="M3 7l3-3h-2v-4h-2v4h-2z" fill="#8f8f8f"/></svg>
<svg style="left:224px;top:84px" width="11" height="9"><rect x="0" y="1.5" width="9" height="7.5" rx="1.5" fill="#3d9a86"/><path d="M2 5h2M5 6h2" stroke="#b8e0d4" stroke-width="0.8"/><circle cx="8.5" cy="2" r="2" fill="#f29a38"/></svg>
</body></html>
